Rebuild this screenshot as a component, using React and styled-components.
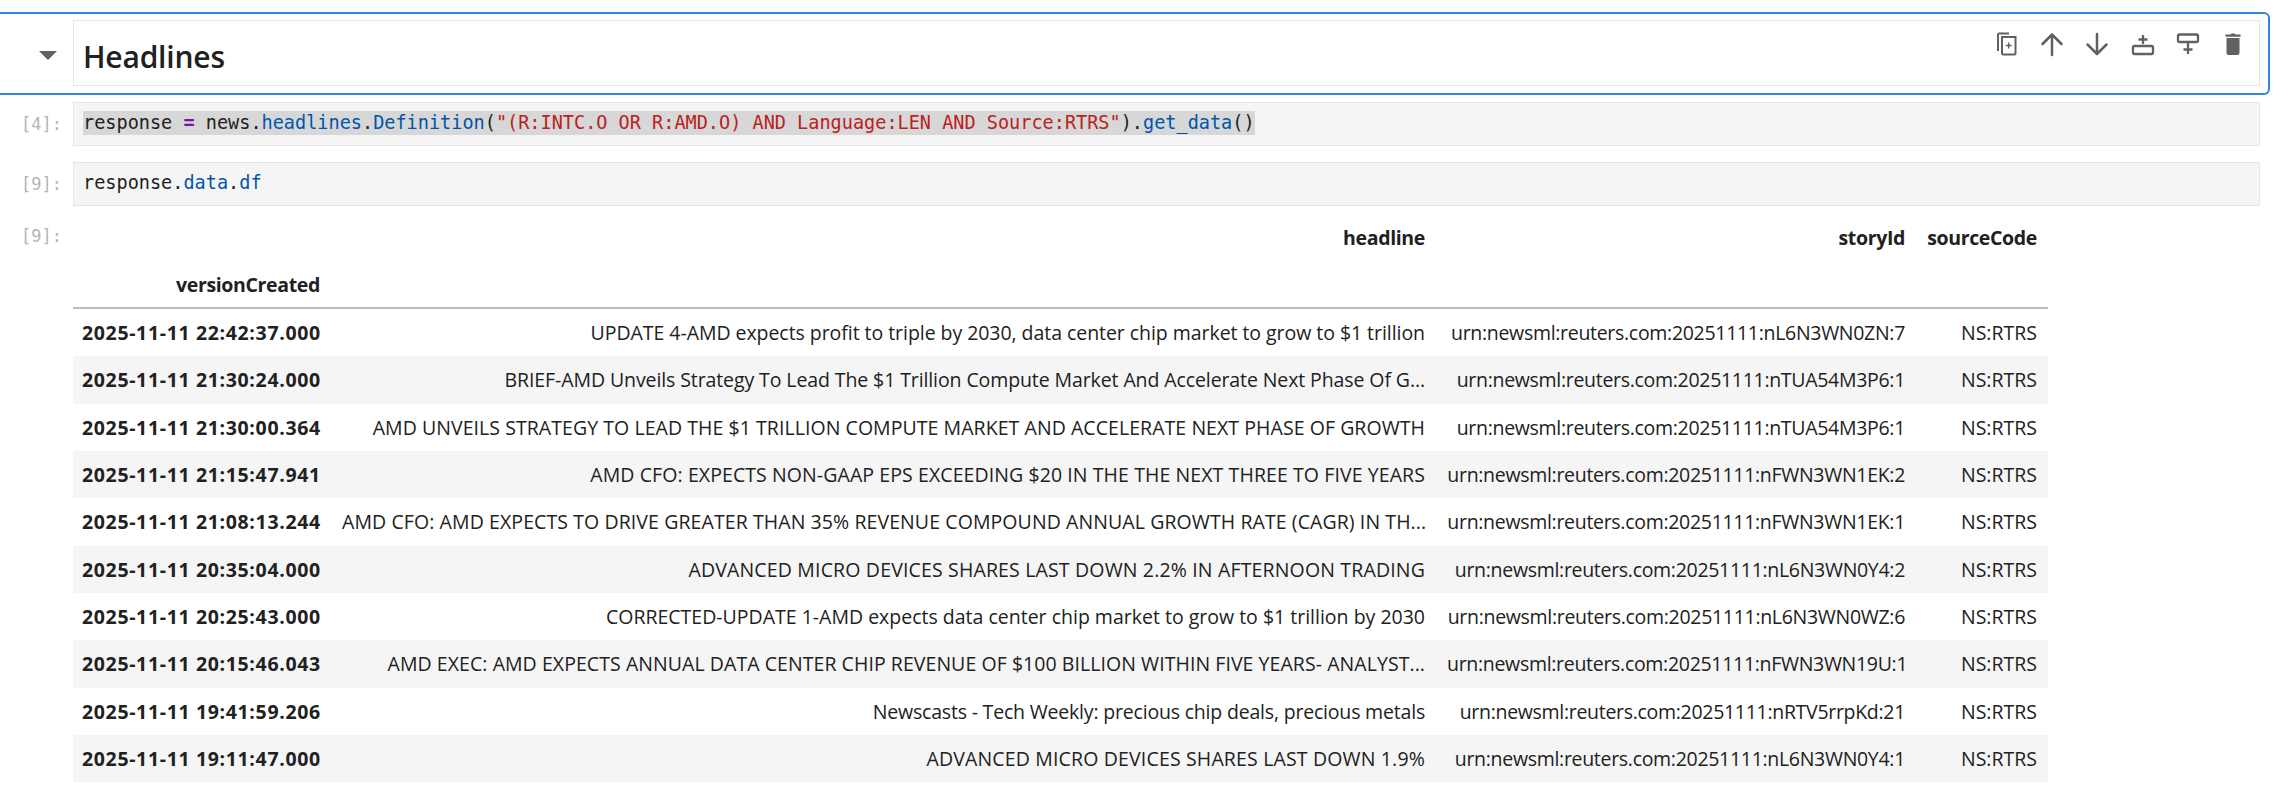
import styled, { createGlobalStyle } from "styled-components";

const GlobalStyle = createGlobalStyle`
  html, body {
    margin: 0;
    padding: 0;
    background: #fff;
  }
  body {
    width: 2280px;
    height: 802px;
    overflow: hidden;
    font-family: "Open Sans", "Noto Sans", sans-serif;
    color: #212121;
  }
`;

// time, headline, story id, tracking for the headline
const rows = [
  ["2025-11-11 22:42:37.000", "UPDATE 4-AMD expects profit to triple by 2030, data center chip market to grow to $1 trillion", "urn:newsml:reuters.com:20251111:nL6N3WN0ZN:7", "-0.05px"],
  ["2025-11-11 21:30:24.000", "BRIEF-AMD Unveils Strategy To Lead The $1 Trillion Compute Market And Accelerate Next Phase Of G...", "urn:newsml:reuters.com:20251111:nTUA54M3P6:1", "-0.1px"],
  ["2025-11-11 21:30:00.364", "AMD UNVEILS STRATEGY TO LEAD THE $1 TRILLION COMPUTE MARKET AND ACCELERATE NEXT PHASE OF GROWTH", "urn:newsml:reuters.com:20251111:nTUA54M3P6:1", "0.06px"],
  ["2025-11-11 21:15:47.941", "AMD CFO: EXPECTS NON-GAAP EPS EXCEEDING $20 IN THE THE NEXT THREE TO FIVE YEARS", "urn:newsml:reuters.com:20251111:nFWN3WN1EK:2", "0.09px"],
  ["2025-11-11 21:08:13.244", "AMD CFO: AMD EXPECTS TO DRIVE GREATER THAN 35% REVENUE COMPOUND ANNUAL GROWTH RATE (CAGR) IN TH...", "urn:newsml:reuters.com:20251111:nFWN3WN1EK:1", "0.09px"],
  ["2025-11-11 20:35:04.000", "ADVANCED MICRO DEVICES SHARES LAST DOWN 2.2% IN AFTERNOON TRADING", "urn:newsml:reuters.com:20251111:nL6N3WN0Y4:2", "0.16px"],
  ["2025-11-11 20:25:43.000", "CORRECTED-UPDATE 1-AMD expects data center chip market to grow to $1 trillion by 2030", "urn:newsml:reuters.com:20251111:nL6N3WN0WZ:6", "0"],
  ["2025-11-11 20:15:46.043", "AMD EXEC: AMD EXPECTS ANNUAL DATA CENTER CHIP REVENUE OF $100 BILLION WITHIN FIVE YEARS- ANALYST...", "urn:newsml:reuters.com:20251111:nFWN3WN19U:1", "0.06px"],
  ["2025-11-11 19:41:59.206", "Newscasts - Tech Weekly: precious chip deals, precious metals", "urn:newsml:reuters.com:20251111:nRTV5rrpKd:21", "-0.19px"],
  ["2025-11-11 19:11:47.000", "ADVANCED MICRO DEVICES SHARES LAST DOWN 1.9%", "urn:newsml:reuters.com:20251111:nL6N3WN0Y4:1", "0.16px"],
];

const Notebook = styled.div`
  padding-top: 12px;
`;

const ActiveCell = styled.div`
  display: flex;
  width: 2270px;
  height: 83px;
  box-sizing: border-box;
  border: 2px solid #3088de;
  border-left: none;
  border-radius: 0 6px 6px 0;
  padding: 6px 8px 7px 0;
`;

const Collapser = styled.div`
  width: 73px;
  flex: none;
  padding: 31px 0 0 39px;
  box-sizing: border-box;
`;

const Caret = styled.div`
  width: 0;
  height: 0;
  border-left: 9px solid transparent;
  border-right: 9px solid transparent;
  border-top: 9px solid #616161;
`;

const MarkdownBox = styled.div`
  flex: 1;
  display: flex;
  justify-content: space-between;
  border: 1px solid #e6e6e6;
  box-sizing: border-box;
  padding-left: 9px;
`;

const Title = styled.h1`
  margin: 0;
  padding-top: 5px;
  font-size: 30px;
  font-weight: 600;
  line-height: 62px;
  letter-spacing: -0.2px;
  color: #212121;
`;

const Toolbar = styled.div`
  display: flex;
  align-items: flex-start;
  gap: 15px;
  padding: 10px 11px 0 0;
`;

const ToolIcon = styled.svg`
  width: 30px;
  height: 26px;
  display: block;
`;

const CodeRow = styled.div`
  display: flex;
  margin-top: ${(p) => p.$top}px;
`;

const Prompt = styled.div`
  width: 73px;
  flex: none;
  box-sizing: border-box;
  padding-left: 21px;
  font-family: "DejaVu Sans Mono", monospace;
  font-size: 17px;
  line-height: 44px;
  color: #b5b5b5;
`;

const CodeBox = styled.div`
  width: 2187px;
  height: 44px;
  box-sizing: border-box;
  border: 1px solid #e6e6e6;
  background: #f5f5f5;
  padding: 8px 9px;
  font-family: "DejaVu Sans Mono", monospace;
  font-size: 18.55px;
  line-height: 24px;
  white-space: pre;
`;

const Selected = styled.span`
  display: inline-block;
  background: #d7d7d7;
  height: 24px;
`;

const Str = styled.span`
  color: #ba2121;
`;
const Prop = styled.span`
  color: #0055aa;
`;
const Op = styled.span`
  color: #7216ab;
  font-weight: 700;
`;

const OutputRow = styled.div`
  display: flex;
  margin-top: 8px;
`;

const Table = styled.table`
  border-collapse: collapse;
  table-layout: fixed;
  width: 1975px;
  font-size: 19.5px;
`;

const HeadCell = styled.th`
  height: ${(p) => (p.$rule ? 46 : 47)}px;
  padding: 0 11px;
  text-align: right;
  font-weight: 700;
  white-space: nowrap;
  letter-spacing: -0.35px;
  border-bottom: ${(p) => (p.$rule ? "2px solid #bdbdbd" : "none")};
`;

const BodyRow = styled.tr`
  background: ${(p) => (p.$odd ? "#f5f5f5" : "#fff")};
`;

const IndexCell = styled.th`
  height: 47.33px;
  padding: 0 13px 0 9px;
  text-align: right;
  font-weight: 700;
  white-space: nowrap;
  letter-spacing: 0.65px;
`;

const Cell = styled.td`
  height: 47.33px;
  padding: 0 11px;
  text-align: right;
  white-space: nowrap;
  letter-spacing: ${(p) => p.$spacing || "0"};
`;

const CopyIcon = () => (
  <ToolIcon viewBox="1 0 30 26">
    <path d="M6 20V3.500a1 1 0 0 1 1-1h10" fill="none" stroke="#616161" strokeWidth="2" />
    <path d="M10 6h13.500v16.500a1 1 0 0 1-1 1H11a1 1 0 0 1-1-1z" fill="none" stroke="#616161" strokeWidth="2" />
    <path d="M16.700 11.500v6M13.700 14.500h6" fill="none" stroke="#616161" strokeWidth="1.400" />
  </ToolIcon>
);

const UpIcon = () => (
  <ToolIcon viewBox="1 0 30 26">
    <path d="M5.500 13L15 3.500L24.500 13M15 4v20" fill="none" stroke="#616161" strokeWidth="2.500" strokeLinecap="round" strokeLinejoin="round" />
  </ToolIcon>
);

const DownIcon = () => (
  <ToolIcon viewBox="1 0 30 26">
    <path d="M5.500 13.500L15 23L24.500 13.500M15 22.500V3" fill="none" stroke="#616161" strokeWidth="2.500" strokeLinecap="round" strokeLinejoin="round" />
  </ToolIcon>
);

const AddAboveIcon = () => (
  <ToolIcon viewBox="0 0 30 26">
    <rect x="5" y="15" width="20" height="8" rx="1.500" fill="none" stroke="#616161" strokeWidth="2.300" />
    <path d="M15 4v9M10.500 8.500h9" fill="none" stroke="#616161" strokeWidth="2.300" />
  </ToolIcon>
);

const AddBelowIcon = () => (
  <ToolIcon viewBox="0 0 30 26">
    <rect x="5" y="3.500" width="20" height="7.500" rx="1.500" fill="none" stroke="#616161" strokeWidth="2.300" />
    <path d="M15 11v12M10.500 18.500h9" fill="none" stroke="#616161" strokeWidth="2.300" />
  </ToolIcon>
);

const TrashIcon = () => (
  <ToolIcon viewBox="0 0 30 26">
    <path d="M7.500 3.500h5l1-1h3l1 1h5v2.300h-15zM8.500 7h13v15a2 2 0 0 1-2 2h-9a2 2 0 0 1-2-2z" fill="#616161" />
  </ToolIcon>
);

export default function App() {
  return (
    <>
      <GlobalStyle />
      <Notebook>
        <ActiveCell>
          <Collapser>
            <Caret />
          </Collapser>
          <MarkdownBox>
            <Title>Headlines</Title>
            <Toolbar>
              <CopyIcon />
              <UpIcon />
              <DownIcon />
              <AddAboveIcon />
              <AddBelowIcon />
              <TrashIcon />
            </Toolbar>
          </MarkdownBox>
        </ActiveCell>
        <CodeRow $top={7}>
          <Prompt>[4]:</Prompt>
          <CodeBox>
            <Selected>
              response <Op>=</Op> news.<Prop>headlines</Prop>.<Prop>Definition</Prop>(
              <Str>"(R:INTC.O OR R:AMD.O) AND Language:LEN AND Source:RTRS"</Str>).<Prop>get_data</Prop>()
            </Selected>
          </CodeBox>
        </CodeRow>
        <CodeRow $top={16}>
          <Prompt>[9]:</Prompt>
          <CodeBox>
            response.<Prop>data</Prop>.<Prop>df</Prop>
          </CodeBox>
        </CodeRow>
        <OutputRow>
          <Prompt>[9]:</Prompt>
          <Table>
            <colgroup>
              <col style={{ width: 258 }} />
              <col style={{ width: 1105 }} />
              <col style={{ width: 480 }} />
              <col style={{ width: 132 }} />
            </colgroup>
            <thead>
              <tr>
                <HeadCell />
                <HeadCell>headline</HeadCell>
                <HeadCell>storyId</HeadCell>
                <HeadCell>sourceCode</HeadCell>
              </tr>
              <tr>
                <HeadCell $rule>versionCreated</HeadCell>
                <HeadCell $rule />
                <HeadCell $rule />
                <HeadCell $rule />
              </tr>
            </thead>
            <tbody>
              {rows.map((r, i) => (
                <BodyRow key={r[0]} $odd={i % 2 === 1}>
                  <IndexCell>{r[0]}</IndexCell>
                  <Cell $spacing={r[3]}>{r[1]}</Cell>
                  <Cell $spacing="-0.3px">{r[2]}</Cell>
                  <Cell>NS:RTRS</Cell>
                </BodyRow>
              ))}
            </tbody>
          </Table>
        </OutputRow>
      </Notebook>
    </>
  );
}
